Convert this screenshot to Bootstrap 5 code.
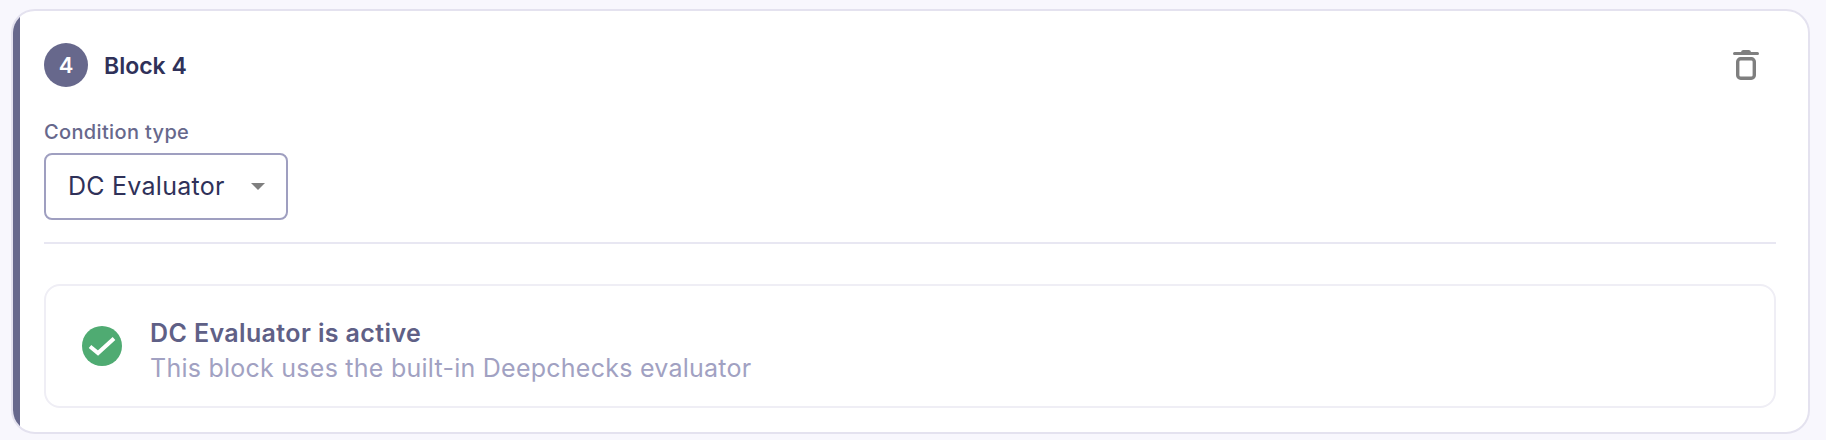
<!DOCTYPE html>
<html lang="en">
<head>
    <meta charset="UTF-8">
    <title>Block 4</title>
    <link href="https://cdn.jsdelivr.net/npm/bootstrap@5.3.0/dist/css/bootstrap.min.css" rel="stylesheet">
    <style>
        body {
            font-family: "Inter", "Noto Sans", sans-serif;
            background: #f8f7fd;
            color: #2f3159;
            padding: 9px 16px 6px 11px;
            height: 440px;
            overflow: hidden;
        }
        .block-box {
            height: 425px;
            background: #fff;
            border: 2px solid #e4e2ef;
            border-radius: 24px;
            overflow: hidden;
        }
        .block-inner {
            height: 100%;
            border-left: 8px solid #67688c;
            padding: 32px 32px 0 24px;
            margin-left: -1px;
        }
        .step-num {
            width: 44px;
            height: 44px;
            background: #67688c;
            color: #fff;
            font-size: 22px;
            font-weight: 600;
        }
        .block-title {
            font-size: 23px;
            font-weight: 600;
            margin-left: 16px;
            padding-top: 2px;
        }
        .trash-btn {
            margin-right: 17px;
            margin-top: 6px;
        }
        .cond-label {
            font-size: 20px;
            font-weight: 500;
            color: #67688c;
            margin: 33px 0 9px;
            line-height: 24px;
            letter-spacing: 0.35px;
        }
        .cond-select {
            width: 244px;
            height: 67px;
            border: 2px solid #9f9fc0;
            border-radius: 8px;
            background: #fff;
            color: #2f3159;
            font-size: 25px;
            padding: 0 22px;
            letter-spacing: 0.25px;
        }
        .caret-down {
            border-left: 7px solid transparent;
            border-right: 7px solid transparent;
            border-top: 7px solid #7f7f7f;
            margin-right: -1px;
        }
        .block-line {
            margin: 22px 0 40px;
            border-top: 2px solid #e8e7f2;
            opacity: 1;
        }
        .active-panel {
            height: 124px;
            border: 2px solid #efeef5;
            border-radius: 16px;
            padding: 0 36px;
        }
        .ok-icon {
            width: 40px;
            height: 40px;
            margin-right: 28px;
        }
        .active-text {
            padding-top: 10px;
        }
        .active-title {
            font-size: 25px;
            font-weight: 600;
            color: #5f6086;
            line-height: 34px;
            letter-spacing: 0.38px;
        }
        .active-sub {
            font-size: 25px;
            color: #a1a1c2;
            line-height: 37px;
            letter-spacing: 0.25px;
        }
    </style>
</head>
<body>

    <div class="block-box">
        <div class="block-inner">
            <div class="d-flex justify-content-between align-items-start">
                <div class="d-flex align-items-center">
                    <div class="step-num rounded-circle d-flex align-items-center justify-content-center">4</div>
                    <div class="block-title">Block 4</div>
                </div>
                <div class="trash-btn">
                    <svg width="26" height="32" viewBox="0 0 26 32" fill="none">
                        <path d="M1.5 4.5H24.5" stroke="#7f7f7f" stroke-width="3" stroke-linecap="round"/>
                        <path d="M8 3.5Q8 1 10 1H16Q18 1 18 3.5Z" fill="#7f7f7f"/>
                        <rect x="4.7" y="9.7" width="16.6" height="19.6" rx="3" stroke="#7f7f7f" stroke-width="3.4"/>
                    </svg>
                </div>
            </div>

            <div class="cond-label">Condition type</div>
            <div class="cond-select d-flex align-items-center justify-content-between">
                <span>DC Evaluator</span>
                <span class="caret-down"></span>
            </div>

            <hr class="block-line">

            <div class="active-panel d-flex align-items-center">
                <svg class="ok-icon flex-shrink-0" viewBox="0 0 40 40">
                    <circle cx="20" cy="20" r="20" fill="#4fab72"/>
                    <path d="M8 20.5L16 27L32 12.5" fill="none" stroke="#fff" stroke-width="4"/>
                </svg>
                <div class="active-text">
                    <div class="active-title">DC Evaluator is active</div>
                    <div class="active-sub">This block uses the built-in Deepchecks evaluator</div>
                </div>
            </div>
        </div>
    </div>

</body>
</html>
